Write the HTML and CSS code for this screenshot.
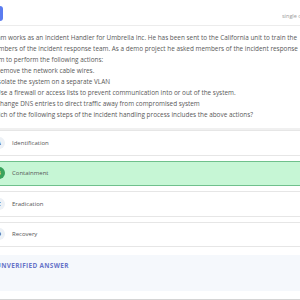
FILE: index.html
```html
<!DOCTYPE html>
<html lang="en">
<head>
    <meta charset="UTF-8">
    <title>Question</title>
    <link rel="stylesheet" href="styles.css">
</head>
<body>

<div class="page">
    <div class="topbar">
        <span class="back-btn"></span>
        <span class="q-type">single choice</span>
    </div>

    <div class="question">
        Adam works as an Incident Handler for Umbrella Inc. He has been sent to the California unit to train the<br>
        members of the incident response team. As a demo project he asked members of the incident response<br>
        team to perform the following actions:<br>
        <span class="item">-Remove the network cable wires.</span><br>
        <span class="item">-Isolate the system on a separate VLAN</span><br>
        <span class="item">-Use a firewall or access lists to prevent communication into or out of the system.</span><br>
        <span class="item">-Change DNS entries to direct traffic away from compromised system</span><br>
        Which of the following steps of the incident handling process includes the above actions?
    </div>

    <div class="options">
        <div class="option">
            <span class="letter">A</span>
            <span>Identification</span>
        </div>
        <div class="option correct">
            <span class="letter">B</span>
            <span>Containment</span>
        </div>
        <div class="option">
            <span class="letter">C</span>
            <span>Eradication</span>
        </div>
        <div class="option">
            <span class="letter">D</span>
            <span>Recovery</span>
        </div>
    </div>

    <div class="answer-box">
        <div class="answer-title">UNVERIFIED ANSWER</div>
    </div>

    <div class="next-card"></div>
</div>

</body>
</html>
```

FILE: styles.css
```css
body {
    margin: 0;
    background-color: #fff;
    font-family: "Open Sans", sans-serif;
    color: #555;
    overflow: hidden;
}

.page {
    margin-left: -14px;
    width: 330px;
}

.topbar {
    height: 25px;
    border-bottom: 1px solid #ececec;
    display: flex;
    align-items: center;
    justify-content: space-between;
}

.back-btn {
    width: 17px;
    height: 15px;
    background-color: #5b7cf0;
    border-radius: 3px;
    margin-top: 1px;
}

.q-type {
    font-size: 5.5px;
    color: #9a9a9a;
    width: 34px;
    white-space: nowrap;
    overflow: hidden;
    margin-top: 6px;
}

.question {
    padding: 6px 0 8px 3px;
    font-size: 6.4px;
    line-height: 11px;
    color: #585858;
    white-space: nowrap;
    border-bottom: 2px solid #f0f0f0;
}

.question .item {
    padding-left: 5px;
}

.options {
    display: flex;
    flex-direction: column;
}

.option {
    height: 25.5px;
    box-sizing: border-box;
    border: 1px solid #e6e6e6;
    border-radius: 4px;
    margin-bottom: 5px;
    display: flex;
    align-items: center;
    gap: 7px;
    padding-left: 6px;
    font-size: 6px;
    color: #555;
}

.option .letter {
    width: 12px;
    height: 12px;
    border-radius: 50%;
    background-color: #edf1f6;
    color: #333;
    font-size: 5px;
    font-weight: bold;
    display: flex;
    align-items: center;
    justify-content: center;
}

.option.correct {
    background-color: #c6f6d5;
    border-color: #6fc08c;
}

.option.correct .letter {
    background-color: #3aa35d;
    color: #fff;
}

.answer-box {
    margin-top: 3px;
    height: 36px;
    box-sizing: border-box;
    background-color: #f5f8fc;
    padding: 7px 0 0 10px;
}

.answer-title {
    font-size: 6.4px;
    line-height: 8px;
    font-weight: bold;
    color: #6874c9;
    letter-spacing: 0.35px;
}

.next-card {
    margin-top: 8px;
    border-top: 2px solid #d4d4d4;
}
```
